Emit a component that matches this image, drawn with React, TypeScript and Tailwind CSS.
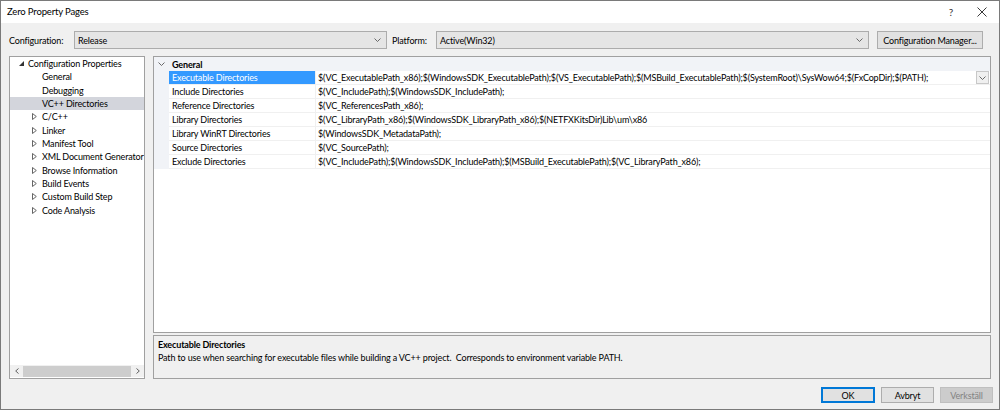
import React from 'react';

const treeItems = [
  { label: 'General', arrow: false },
  { label: 'Debugging', arrow: false },
  { label: 'VC++ Directories', arrow: false, selected: true },
  { label: 'C/C++', arrow: true },
  { label: 'Linker', arrow: true },
  { label: 'Manifest Tool', arrow: true },
  { label: 'XML Document Generator', arrow: true },
  { label: 'Browse Information', arrow: true },
  { label: 'Build Events', arrow: true },
  { label: 'Custom Build Step', arrow: true },
  { label: 'Code Analysis', arrow: true },
];

const props = [
  {
    name: 'Executable Directories',
    value:
      '$(VC_ExecutablePath_x86);$(WindowsSDK_ExecutablePath);$(VS_ExecutablePath);$(MSBuild_ExecutablePath);$(SystemRoot)\\SysWow64;$(FxCopDir);$(PATH);',
    selected: true,
  },
  { name: 'Include Directories', value: '$(VC_IncludePath);$(WindowsSDK_IncludePath);' },
  { name: 'Reference Directories', value: '$(VC_ReferencesPath_x86);' },
  {
    name: 'Library Directories',
    value: '$(VC_LibraryPath_x86);$(WindowsSDK_LibraryPath_x86);$(NETFXKitsDir)Lib\\um\\x86',
  },
  { name: 'Library WinRT Directories', value: '$(WindowsSDK_MetadataPath);' },
  { name: 'Source Directories', value: '$(VC_SourcePath);' },
  {
    name: 'Exclude Directories',
    value: '$(VC_IncludePath);$(WindowsSDK_IncludePath);$(MSBuild_ExecutablePath);$(VC_LibraryPath_x86);',
  },
];

function Chevron({ className = '' }: { className?: string }) {
  return (
    <svg width="7" height="4" viewBox="0 0 7 4" className={className}>
      <path d="M0.5 0.5 L3.5 3.5 L6.5 0.5" fill="none" stroke="#5a5a5a" strokeWidth="0.9" />
    </svg>
  );
}

function Dropdown({ value, width }: { value: string; width: string }) {
  return (
    <div className={`${width} shrink-0 h-[18px] flex items-center justify-between bg-[#e5e5e5] border border-[#acacac] pl-[3px] pr-[5px]`}>
      <span>{value}</span>
      <Chevron />
    </div>
  );
}

function Button({ label, primary, disabled, width }: { label: string; primary?: boolean; disabled?: boolean; width: string }) {
  return (
    <div
      className={`${width} h-[16px] flex items-center justify-center ${
        primary
          ? 'bg-[#e1e1e1] border border-[#0078d7] outline outline-1 outline-[#0078d7] -outline-offset-2'
          : disabled
          ? 'bg-[#cccccc] border border-[#bfbfbf] text-[#838383]'
          : 'bg-[#e1e1e1] border border-[#adadad]'
      }`}
    >
      {label}
    </div>
  );
}

export default function App() {
  return (
    <div className="w-[1000px] h-[410px] flex flex-col border border-[#7a7a7a] bg-[#f0f0f0] text-[9px] tracking-[-0.15px] leading-none text-black font-['Lato','Liberation_Sans',sans-serif] overflow-hidden">
      {/* Title bar */}
      <div className="h-[22px] bg-white flex items-center justify-between pl-[6px] pr-[12px] shrink-0">
        <span className="text-[9.5px]">Zero Property Pages</span>
        <div className="flex items-center gap-[24px]">
          <span className="text-[10px] text-[#333]">?</span>
          <svg width="10" height="10" viewBox="0 0 10 10">
            <path d="M0.5 0.5 L9.5 9.5 M9.5 0.5 L0.5 9.5" stroke="#222" strokeWidth="0.9" />
          </svg>
        </div>
      </div>

      <div className="flex-1 flex flex-col px-[8px] pt-[8px]">
        {/* Configuration row */}
        <div className="flex items-center h-[18px] whitespace-nowrap">
          <span className="w-[65px] shrink-0">Configuration:</span>
          <Dropdown value="Release" width="w-[313px]" />
          <span className="w-[49px] shrink-0 pl-[5px]">Platform:</span>
          <Dropdown value="Active(Win32)" width="w-[433px]" />
          <div className="ml-[8px] w-[106px] shrink-0 h-[18px] flex items-center justify-center bg-[#e1e1e1] border border-[#adadad]">
            Configuration Manager...
          </div>
        </div>

        {/* Panels */}
        <div className="flex gap-[8px] mt-[7px] h-[323px]">
          {/* Tree */}
          <div className="w-[136px] shrink-0 bg-white border border-[#a0a0a0] flex flex-col overflow-hidden">
            <div className="flex-1 overflow-hidden">
              <div className="h-[13.33px] flex items-center whitespace-nowrap">
                <svg width="6" height="6" viewBox="0 0 6 6" className="ml-[9px] mr-[3px] shrink-0">
                  <path d="M5 0 L5 5 L0 5 Z" fill="#333" />
                </svg>
                <span>Configuration Properties</span>
              </div>
              {treeItems.map((item) => (
                <div
                  key={item.label}
                  className={`h-[13.33px] flex items-center whitespace-nowrap ${item.selected ? 'bg-[#d3d5dc]' : ''}`}
                >
                  <div className="w-[32px] flex justify-end pr-[5px] shrink-0">
                    {item.arrow && (
                      <svg width="5" height="7" viewBox="0 0 5 7">
                        <path d="M0.5 0.5 L4.3 3.5 L0.5 6.5 Z" fill="none" stroke="#555" strokeWidth="0.9" />
                      </svg>
                    )}
                  </div>
                  <span>{item.label}</span>
                </div>
              ))}
            </div>
            {/* Scrollbar */}
            <div className="h-[12px] mb-[1px] flex items-center bg-[#f0f0f0] shrink-0">
              <div className="w-[13px] flex justify-center">
                <svg width="4" height="6" viewBox="0 0 4 6">
                  <path d="M3.5 0.5 L0.7 3 L3.5 5.5" fill="none" stroke="#606060" strokeWidth="1" />
                </svg>
              </div>
              <div className="flex-1 h-[11px] bg-[#cdcdcd]" />
              <div className="w-[13px] flex justify-center">
                <svg width="4" height="6" viewBox="0 0 4 6">
                  <path d="M0.5 0.5 L3.3 3 L0.5 5.5" fill="none" stroke="#606060" strokeWidth="1" />
                </svg>
              </div>
            </div>
          </div>

          {/* Right column */}
          <div className="flex-1 min-w-0 flex flex-col gap-[2px]">
            {/* Property grid */}
            <div className="flex-1 bg-white border border-[#a0a0a0] overflow-hidden">
              <div className="h-[14px] flex items-center bg-[#f1f3f7]">
                <div className="w-[15px] flex justify-center">
                  <Chevron />
                </div>
                <span className="pl-[3px] font-bold">General</span>
              </div>
              {props.map((p) => (
                <div key={p.name} className="h-[14px] flex">
                  <div className="w-[15px] bg-[#f1f3f7] shrink-0" />
                  <div
                    className={`w-[146px] shrink-0 flex items-center pl-[3px] border-b border-[#f0f0f0] whitespace-nowrap ${
                      p.selected ? 'bg-[#3399ff] text-white border-[#3399ff]' : ''
                    }`}
                  >
                    {p.name}
                  </div>
                  <div className="w-[1px] bg-[#f0f0f0] shrink-0" />
                  <div className="flex-1 min-w-0 flex items-center justify-between pl-[2px] border-b border-[#f0f0f0] whitespace-nowrap">
                    <span>{p.value}</span>
                    {p.selected && (
                      <div className="w-[13px] h-[13px] shrink-0 flex items-center justify-center bg-[#f0f0f0] border border-[#c8c8c8] mr-[1px]">
                        <Chevron />
                      </div>
                    )}
                  </div>
                </div>
              ))}
            </div>

            {/* Description */}
            <div className="h-[44px] shrink-0 bg-[#f0f0f0] border border-[#a0a0a0] pl-[4px] pt-[2px] whitespace-nowrap">
              <div className="h-[13px] flex items-center font-bold">Executable Directories</div>
              <div className="h-[13px] flex items-center">
                Path to use when searching for executable files while building a VC++ project.&nbsp; Corresponds to environment variable PATH.
              </div>
            </div>
          </div>
        </div>

        {/* Buttons */}
        <div className="flex justify-end gap-[6px] mt-[8px] -mr-[2px]">
          <Button label="OK" primary width="w-[54px]" />
          <Button label="Avbryt" width="w-[53px]" />
          <Button label="Verkställ" disabled width="w-[53px]" />
        </div>
      </div>
    </div>
  );
}
